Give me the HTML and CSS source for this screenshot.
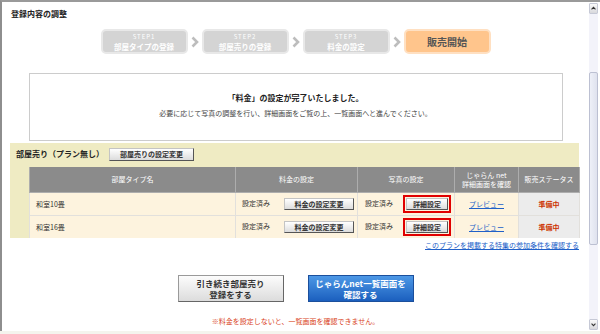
FILE: index.html
```html
<!DOCTYPE html>
<html lang="ja">
<head>
    <meta charset="UTF-8">
    <title>登録内容の調整</title>
    <link rel="stylesheet" href="styles.css">
</head>
<body>
    <div class="window">
        <div class="page">
            <h1 class="page-title">登録内容の調整</h1>

            <div class="steps">
                <div class="step">
                    <span class="step-num">STEP1</span>
                    <span class="step-name">部屋タイプの登録</span>
                </div>
                <div class="step-arrow"><svg width="14" height="25" viewBox="0 0 14 25"><polyline points="4.5,8.5 9,13 4.5,17.5" fill="none" stroke="#bdbdbd" stroke-width="2.6"/></svg></div>
                <div class="step">
                    <span class="step-num">STEP2</span>
                    <span class="step-name">部屋売りの登録</span>
                </div>
                <div class="step-arrow"><svg width="14" height="25" viewBox="0 0 14 25"><polyline points="4.5,8.5 9,13 4.5,17.5" fill="none" stroke="#bdbdbd" stroke-width="2.6"/></svg></div>
                <div class="step">
                    <span class="step-num">STEP3</span>
                    <span class="step-name">料金の設定</span>
                </div>
                <div class="step-arrow"><svg width="14" height="25" viewBox="0 0 14 25"><polyline points="4.5,8.5 9,13 4.5,17.5" fill="none" stroke="#bdbdbd" stroke-width="2.6"/></svg></div>
                <div class="step step-current">販売開始</div>
            </div>

            <div class="notice">
                <h2>「料金」の設定が完了いたしました。</h2>
                <p>必要に応じて写真の調整を行い、詳細画面をご覧の上、一覧画面へと進んでください。</p>
            </div>

            <div class="room-sale">
                <div class="room-sale-head">
                    <h3>部屋売り（プラン無し）</h3>
                    <button class="btn btn-head">部屋売りの設定変更</button>
                </div>
                <table class="room-table">
                    <colgroup>
                        <col style="width: 206px">
                        <col style="width: 122px">
                        <col style="width: 97px">
                        <col style="width: 64px">
                        <col style="width: 61px">
                    </colgroup>
                    <tr>
                        <th>部屋タイプ名</th>
                        <th>料金の設定</th>
                        <th>写真の設定</th>
                        <th>じゃらん net<br>詳細画面を確認</th>
                        <th>販売ステータス</th>
                    </tr>
                    <tr>
                        <td class="name">和室10畳</td>
                        <td class="price">設定済み<button class="btn btn-price">料金の設定変更</button></td>
                        <td class="photo">設定済み<span class="highlight"><button class="btn btn-photo">詳細設定</button></span></td>
                        <td class="preview"><a href="#">プレビュー</a></td>
                        <td class="status">準備中</td>
                    </tr>
                    <tr>
                        <td class="name">和室16畳</td>
                        <td class="price">設定済み<button class="btn btn-price">料金の設定変更</button></td>
                        <td class="photo">設定済み<span class="highlight"><button class="btn btn-photo">詳細設定</button></span></td>
                        <td class="preview"><a href="#">プレビュー</a></td>
                        <td class="status">準備中</td>
                    </tr>
                </table>
            </div>

            <p class="plan-link"><a href="#">このプランを掲載する特集の参加条件を確認する</a></p>

            <div class="actions">
                <button class="btn-big btn-gray">引き続き部屋売り<br>登録をする</button>
                <button class="btn-big btn-blue">じゃらんnet一覧画面を<br>確認する</button>
            </div>

            <p class="warn">※料金を設定しないと、一覧画面を確認できません。</p>
        </div>

        <div class="scrollbar">
            <div class="sb-arrow"><svg width="9" height="9" viewBox="0 0 9 9"><polyline points="2,5.5 4.5,3 7,5.5" fill="none" stroke="#333" stroke-width="1.4"/></svg></div>
            <div class="sb-track">
                <div class="sb-thumb"></div>
            </div>
            <div class="sb-arrow"><svg width="9" height="9" viewBox="0 0 9 9"><polyline points="2,3.5 4.5,6 7,3.5" fill="none" stroke="#333" stroke-width="1.4"/></svg></div>
        </div>
    </div>
    <div class="footer-strip"></div>
</body>
</html>
```

FILE: styles.css
```css
body {
    margin: 0;
    font-family: "Noto Sans CJK JP", "Liberation Sans", sans-serif;
    color: #333;
    background-color: #fff;
}
.window {
    display: flex;
    height: 329px;
    border-top: 2px solid #9a9a9a;
    border-left: 2px solid #8e8e8e;
}
.page {
    flex: 1;
    min-width: 0;
}
.page-title {
    margin: 7px 0 0 9px;
    font-size: 8px;
    line-height: 10px;
    color: #222;
}

/* steps */
.steps {
    display: flex;
    justify-content: center;
    margin-top: 10px;
}
.step {
    width: 87px;
    height: 25px;
    box-sizing: border-box;
    border: 2px solid #e8e8e8;
    border-radius: 5px;
    background-color: #d4d4d4;
    color: #fff;
    text-align: center;
}
.step-num {
    display: block;
    padding-top: 1px;
    font-size: 6px;
    line-height: 9px;
    letter-spacing: 1px;
}
.step-name {
    display: block;
    font-size: 7.5px;
    font-weight: bold;
    line-height: 11px;
}
.step-current {
    background-color: #ffc58c;
    border-color: #ffe0c2;
    color: #555;
    font-size: 10px;
    font-weight: bold;
    line-height: 21px;
}
.step-arrow {
    width: 14px;
    display: flex;
}

/* notice */
.notice {
    width: 534px;
    height: 68px;
    box-sizing: border-box;
    margin: 19px auto 0;
    padding-top: 19px;
    border: 1px solid #ccc;
    text-align: center;
}
.notice h2 {
    margin: 0;
    font-size: 8px;
    line-height: 10px;
    color: #222;
}
.notice p {
    margin: 6px 0 0;
    font-size: 7px;
    line-height: 9px;
    color: #444;
}

/* room sale table */
.room-sale {
    margin: 2px 10px 0 8px;
    background-color: #efebc3;
}
.room-sale-head {
    display: flex;
    align-items: center;
    height: 14px;
    padding: 4px 0 0 6px;
}
.room-sale-head h3 {
    margin: 0 5px 0 0;
    font-size: 8px;
    line-height: 10px;
    color: #222;
}
.btn {
    height: 12px;
    padding: 0;
    font-family: inherit;
    font-size: 7px;
    font-weight: bold;
    line-height: 10px;
    color: #333;
    background: linear-gradient(#fff, #dcdcdc);
    border: 1px solid;
    border-color: #c4c4c4 #555 #555 #c4c4c4;
    vertical-align: middle;
}
.btn-head {
    width: 85px;
    height: 13px;
}
.btn-price {
    width: 70px;
    margin-left: 14px;
}
.btn-photo {
    width: 42px;
}
.highlight {
    display: inline-block;
    margin-left: 10px;
    padding: 1px;
    border: 2px solid #e00000;
    line-height: 0;
    vertical-align: middle;
}
.room-table {
    width: 550px;
    margin: 6px 0 0 19px;
    border-collapse: collapse;
    table-layout: fixed;
    font-size: 7px;
}
.room-table th {
    height: 25px;
    padding: 0;
    background-color: #8b8b8b;
    border: 1px solid #adadad;
    border-top: none;
    color: #fff;
    font-weight: normal;
    line-height: 9px;
}
.room-table td {
    height: 22px;
    padding: 0;
    background-color: #fdf3de;
    border: 1px solid #e2e0dc;
    border-bottom: none;
    line-height: 9px;
    white-space: nowrap;
}
.room-table .name {
    padding-left: 6px;
}
.room-table .price {
    padding-left: 6px;
}
.room-table .photo {
    padding-left: 7px;
}
.room-table .preview {
    text-align: center;
}
.room-table .status {
    background-color: #ececec;
    color: #cc3300;
    font-weight: bold;
    text-align: center;
}
a {
    color: #2060c8;
}
.plan-link {
    margin: 3px 10px 0 0;
    font-size: 7px;
    line-height: 9px;
    text-align: right;
}

/* bottom buttons */
.actions {
    display: flex;
    justify-content: center;
    gap: 24px;
    margin-top: 25px;
}
.btn-big {
    width: 106px;
    height: 27px;
    padding: 0;
    font-family: inherit;
    font-size: 8.5px;
    font-weight: bold;
    line-height: 11px;
}
.btn-gray {
    background: linear-gradient(#fcfcfc, #dcdcdc);
    border: 1px solid #9a9a9a;
    border-right-color: #666;
    border-bottom-color: #666;
    color: #333;
}
.btn-blue {
    background: linear-gradient(#4d98e6, #1b5fbe);
    border: 1px solid #1b4f9c;
    color: #fff;
}
.warn {
    margin: 14px 0 0;
    font-size: 7px;
    line-height: 10px;
    color: #d9441c;
    text-align: center;
}

/* fake scrollbar */
.scrollbar {
    width: 11px;
    display: flex;
    flex-direction: column;
    padding: 1px 2px 1px 0;
    box-sizing: border-box;
}
.sb-arrow {
    height: 9px;
    border: 1px solid #c6c9d6;
    border-radius: 1px;
    background: linear-gradient(#fafafa, #d8d8dc);
    display: flex;
}
.sb-track {
    flex: 1;
    background-color: #f3f3fa;
}
.sb-thumb {
    height: 173px;
    margin-top: 58px;
    box-sizing: border-box;
    border: 1px solid #bcc0d2;
    border-radius: 2px;
    background: linear-gradient(90deg, #eef0f8, #dfe2ee);
}
.footer-strip {
    height: 3px;
    background-color: #f4f4ee;
}
```
